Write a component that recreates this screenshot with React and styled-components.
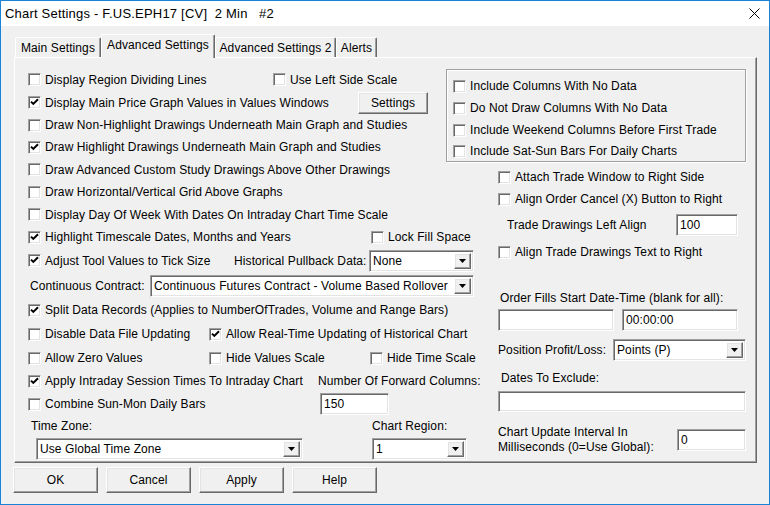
import React from "react";
import styled, { createGlobalStyle, css } from "styled-components";

const GlobalStyle = createGlobalStyle`
  body {
    margin: 0;
    background: #fff;
  }
  * {
    box-sizing: border-box;
  }
`;

const raised = css`
  background: #f0f0f0;
  border: 1px solid;
  border-color: #fff #696969 #696969 #fff;
  box-shadow: inset -1px -1px #a0a0a0, inset 1px 1px #e3e3e3;
`;

const sunken = css`
  background: #fff;
  border: 1px solid;
  border-color: #a0a0a0 #fff #fff #a0a0a0;
  box-shadow: inset 1px 1px #696969, inset -1px -1px #e3e3e3;
`;

const Window = styled.div`
  width: 770px;
  height: 505px;
  border: 1px solid #1883d7;
  background: #f0f0f0;
  display: flex;
  flex-direction: column;
  font-family: "Liberation Sans", Arial, sans-serif;
  font-size: 12px;
  letter-spacing: 0.1px;
  color: #000;
  overflow: hidden;
`;

const TitleBar = styled.div`
  height: 25px;
  flex: 0 0 25px;
  background: #fff;
  display: flex;
  align-items: center;
  justify-content: space-between;
  padding: 0 9px 0 4px;
  font-size: 13px;
  letter-spacing: 0.2px;
  white-space: pre;
`;

const Body = styled.div`
  padding: 8px 12px 0 13px;
  display: flex;
  flex-direction: column;
`;

const TabStrip = styled.div`
  display: flex;
  align-items: flex-end;
  height: 23px;
  padding-left: 1px;
`;

const Tab = styled.div`
  width: ${(p) => p.$w}px;
  height: ${(p) => (p.$active ? 24 : 20)}px;
  margin-bottom: ${(p) => (p.$active ? -1 : 0)}px;
  background: #f0f0f0;
  border: 1px solid;
  border-bottom: none;
  border-color: #fff #696969 #696969 #fff;
  box-shadow: inset -1px 0 #a0a0a0;
  border-radius: 2px 2px 0 0;
  position: relative;
  z-index: ${(p) => (p.$active ? 2 : 1)};
  display: flex;
  align-items: ${(p) => (p.$active ? "flex-start" : "center")};
  padding-top: ${(p) => (p.$active ? 3 : 0)}px;
  justify-content: center;
  white-space: nowrap;
`;

const Panel = styled.div`
  height: 406px;
  border: 1px solid;
  border-color: #fff #696969 #696969 #fff;
  box-shadow: inset -1px -1px #a0a0a0;
  padding: 10px 0 0 13px;
  display: grid;
  grid-template-columns: 418px 52px 248px;
  grid-template-rows: 94px auto;
  align-content: start;
`;

const LeftCol = styled.div`
  grid-column: 1 / 3;
  grid-row: 1 / 3;
  display: flex;
  flex-direction: column;
`;

const GroupBox = styled.div`
  grid-column: 2 / 4;
  grid-row: 1;
  margin-top: 1px;
  border: 1px solid #a0a0a0;
  box-shadow: inset 1px 1px #fff, 1px 1px #fff;
  padding: 5px 0 0 6px;
  display: flex;
  flex-direction: column;
`;

const RightCol = styled.div`
  grid-column: 3;
  grid-row: 2;
  display: flex;
  flex-direction: column;
`;

const Row = styled.div`
  display: flex;
  align-items: center;
  flex: 0 0 ${(p) => p.$h}px;
  height: ${(p) => p.$h}px;
  margin-top: ${(p) => p.$mt || 0}px;
  padding-left: ${(p) => p.$pl || 0}px;
  white-space: nowrap;
`;

const Slot = styled.div`
  flex: 0 0 ${(p) => p.$w}px;
  display: flex;
  align-items: center;
  padding-left: ${(p) => p.$pl || 0}px;
`;

const CheckLabel = styled.label`
  display: flex;
  align-items: center;
  gap: 4px;
  white-space: nowrap;
`;

const Box = styled.span`
  ${sunken};
  width: 13px;
  height: 13px;
  flex: 0 0 13px;
  display: flex;
  align-items: center;
  justify-content: center;
`;

const Text = styled.span`
  line-height: ${(p) => p.$lh || 14}px;
  white-space: nowrap;
`;

const Field = styled.div`
  ${sunken};
  width: ${(p) => p.$w}px;
  height: ${(p) => p.$h || 22}px;
  flex: 0 0 ${(p) => p.$w}px;
  display: flex;
  align-items: center;
  padding: 2px 2px 2px 3px;
`;

const Value = styled.span`
  flex: 1;
  white-space: nowrap;
  overflow: hidden;
`;

const DropBtn = styled.span`
  ${raised};
  width: 17px;
  height: 100%;
  flex: 0 0 17px;
  display: flex;
  align-items: center;
  justify-content: center;
`;

const Button = styled.button`
  ${raised};
  width: ${(p) => p.$w || 85}px;
  height: ${(p) => p.$h || 26}px;
  font-family: inherit;
  font-size: 12px;
  letter-spacing: 0.1px;
  color: #000;
  padding: 0;
`;

const ButtonBar = styled.div`
  display: flex;
  gap: 8px;
  margin: 4px 0 0 -1px;
`;

const CheckMark = () => (
  <svg width="9" height="9" viewBox="0 0 9 9">
    <path d="M1 3.6 L3.3 5.9 L8 1.2" fill="none" stroke="#000" strokeWidth="2" />
  </svg>
);

const Check = ({ checked, children }) => (
  <CheckLabel>
    <Box>{checked && <CheckMark />}</Box>
    <span>{children}</span>
  </CheckLabel>
);

const Arrow = () => (
  <svg width="7" height="4" viewBox="0 0 7 4">
    <path d="M0 0 H7 L3.5 4 Z" fill="#000" />
  </svg>
);

const Select = ({ w, value }) => (
  <Field $w={w}>
    <Value>{value}</Value>
    <DropBtn>
      <Arrow />
    </DropBtn>
  </Field>
);

const CloseIcon = () => (
  <svg width="11" height="11" viewBox="0 0 11 11">
    <path d="M0.5 0.5 L10.5 10.5 M10.5 0.5 L0.5 10.5" stroke="#000" strokeWidth="1" />
  </svg>
);

export default function App() {
  return (
    <>
      <GlobalStyle />
      <Window>
        <TitleBar>
          <span>Chart Settings - F.US.EPH17 [CV]  2 Min   #2</span>
          <CloseIcon />
        </TitleBar>
        <Body>
          <TabStrip>
            <Tab $w={86}>Main Settings</Tab>
            <Tab $w={114} $active>
              Advanced Settings
            </Tab>
            <Tab $w={121}>Advanced Settings 2</Tab>
            <Tab $w={41}>Alerts</Tab>
          </TabStrip>
          <Panel>
            <LeftCol>
              <Row $h={23}>
                <Slot $w={245}>
                  <Check>Display Region Dividing Lines</Check>
                </Slot>
                <Check>Use Left Side Scale</Check>
              </Row>
              <Row $h={23}>
                <Slot $w={330}>
                  <Check checked>Display Main Price Graph Values in Values Windows</Check>
                </Slot>
                <Button $w={70} $h={22}>
                  Settings
                </Button>
              </Row>
              <Row $h={22}>
                <Check>Draw Non-Highlight Drawings Underneath Main Graph and Studies</Check>
              </Row>
              <Row $h={22}>
                <Check checked>Draw Highlight Drawings Underneath Main Graph and Studies</Check>
              </Row>
              <Row $h={23}>
                <Check>Draw Advanced Custom Study Drawings Above Other Drawings</Check>
              </Row>
              <Row $h={22}>
                <Check>Draw Horizontal/Vertical Grid Above Graphs</Check>
              </Row>
              <Row $h={23}>
                <Check>Display Day Of Week With Dates On Intraday Chart Time Scale</Check>
              </Row>
              <Row $h={22}>
                <Slot $w={343}>
                  <Check checked>Highlight Timescale Dates, Months and Years</Check>
                </Slot>
                <Check>Lock Fill Space</Check>
              </Row>
              <Row $h={25}>
                <Slot $w={206}>
                  <Check checked>Adjust Tool Values to Tick Size</Check>
                </Slot>
                <Slot $w={135}>Historical Pullback Data:</Slot>
                <Select w={105} value="None" />
              </Row>
              <Row $h={25}>
                <Slot $w={122} $pl={2}>
                  Continuous Contract:
                </Slot>
                <Select w={324} value="Continuous Futures Contract - Volume Based Rollover" />
              </Row>
              <Row $h={24}>
                <Check checked>
                  Split Data Records (Applies to NumberOfTrades, Volume and Range Bars)
                </Check>
              </Row>
              <Row $h={24}>
                <Slot $w={181}>
                  <Check>Disable Data File Updating</Check>
                </Slot>
                <Check checked>Allow Real-Time Updating of Historical Chart</Check>
              </Row>
              <Row $h={24}>
                <Slot $w={181}>
                  <Check>Allow Zero Values</Check>
                </Slot>
                <Slot $w={161}>
                  <Check>Hide Values Scale</Check>
                </Slot>
                <Check>Hide Time Scale</Check>
              </Row>
              <Row $h={22}>
                <Slot $w={290}>
                  <Check checked>Apply Intraday Session Times To Intraday Chart</Check>
                </Slot>
                Number Of Forward Columns:
              </Row>
              <Row $h={24}>
                <Slot $w={292}>
                  <Check>Combine Sun-Mon Daily Bars</Check>
                </Slot>
                <Field $w={69}>150</Field>
              </Row>
              <Row $h={20}>
                <Slot $w={344} $pl={3}>
                  Time Zone:
                </Slot>
                Chart Region:
              </Row>
              <Row $h={21} $mt={2}>
                <Slot $w={344} $pl={8}>
                  <Select w={267} value="Use Global Time Zone" />
                </Slot>
                <Select w={95} value="1" />
              </Row>
            </LeftCol>

            <GroupBox>
              <Row $h={22}>
                <Check>Include Columns With No Data</Check>
              </Row>
              <Row $h={22}>
                <Check>Do Not Draw Columns With No Data</Check>
              </Row>
              <Row $h={22}>
                <Check>Include Weekend Columns Before First Trade</Check>
              </Row>
              <Row $h={20}>
                <Check>Include Sat-Sun Bars For Daily Charts</Check>
              </Row>
            </GroupBox>

            <RightCol>
              <Row $h={22} $mt={4}>
                <Check>Attach Trade Window to Right Side</Check>
              </Row>
              <Row $h={22}>
                <Check>Align Order Cancel (X) Button to Right</Check>
              </Row>
              <Row $h={22} $mt={4}>
                <Slot $w={178} $pl={9}>
                  Trade Drawings Left Align
                </Slot>
                <Field $w={62}>100</Field>
              </Row>
              <Row $h={22} $mt={5}>
                <Check>Align Trade Drawings Text to Right</Check>
              </Row>
              <Row $h={18} $mt={26} $pl={2}>
                Order Fills Start Date-Time (blank for all):
              </Row>
              <Row $h={22} $mt={2}>
                <Slot $w={124}>
                  <Field $w={116} />
                </Slot>
                <Field $w={116}>00:00:00</Field>
              </Row>
              <Row $h={22} $mt={8}>
                <Slot $w={115}>Position Profit/Loss:</Slot>
                <Select w={133} value="Points (P)" />
              </Row>
              <Row $h={17} $mt={8} $pl={3}>
                Dates To Exclude:
              </Row>
              <Row $h={21} $mt={5}>
                <Field $w={248} $h={21} />
              </Row>
              <Row $h={26} $mt={15}>
                <Slot $w={179}>
                  <Text $lh={15}>
                    Chart Update Interval In
                    <br />
                    Milliseconds (0=Use Global):
                  </Text>
                </Slot>
                <Field $w={69}>0</Field>
              </Row>
            </RightCol>
          </Panel>
          <ButtonBar>
            <Button>OK</Button>
            <Button>Cancel</Button>
            <Button>Apply</Button>
            <Button>Help</Button>
          </ButtonBar>
        </Body>
      </Window>
    </>
  );
}
